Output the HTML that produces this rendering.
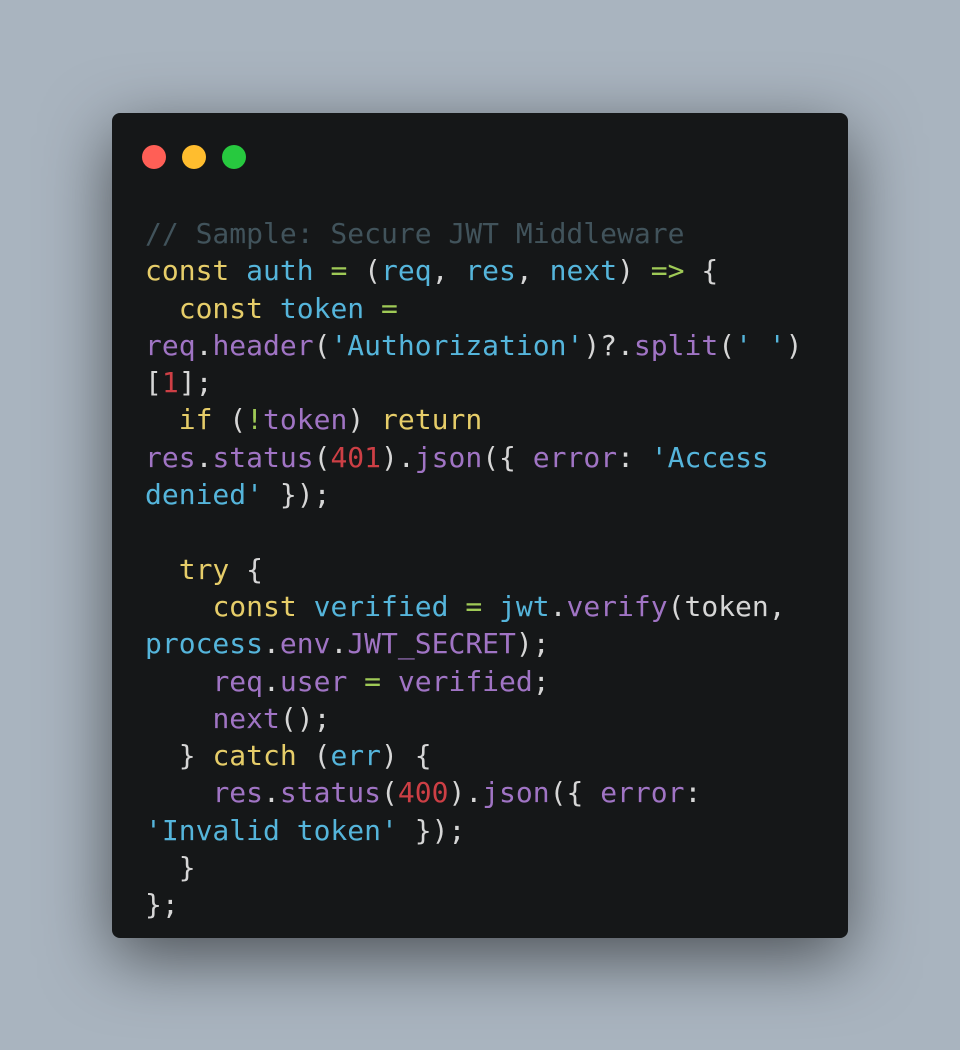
<!DOCTYPE html>
<html><head><meta charset="utf-8"><style>
html,body{margin:0;padding:0;}
body{width:960px;height:1050px;background:#a9b4bf;position:relative;overflow:hidden;font-family:"DejaVu Sans Mono","Liberation Mono",monospace;}
.win{position:absolute;left:112px;top:113px;width:736px;height:825px;background:#151718;border-radius:8px;box-shadow:0 20px 68px rgba(0,0,0,0.55);}
.dot{position:absolute;top:32px;width:24px;height:24px;border-radius:50%;}
pre{position:absolute;left:33px;top:102px;margin:0;font-family:"DejaVu Sans Mono",monospace;font-size:28px;line-height:37.3px;color:#d6d6d6;}
.c{color:#41535b}.k{color:#e6cd69}.b{color:#55b5db}.g{color:#9fca56}.p{color:#a074c4}.r{color:#cd3f45}
</style></head><body>
<div class="win">
<div class="dot" style="left:30px;background:#ff5f56"></div>
<div class="dot" style="left:70px;background:#ffbd2e"></div>
<div class="dot" style="left:110px;background:#27c93f"></div>
<pre><span class="c">// Sample: Secure JWT Middleware</span>
<span class="k">const</span> <span class="b">auth</span> <span class="g">=</span> (<span class="b">req</span>, <span class="b">res</span>, <span class="b">next</span>) <span class="g">=&gt;</span> {
  <span class="k">const</span> <span class="b">token</span> <span class="g">=</span>
<span class="p">req</span>.<span class="p">header</span>(<span class="b">'Authorization'</span>)?.<span class="p">split</span>(<span class="b">' '</span>)
[<span class="r">1</span>];
  <span class="k">if</span> (<span class="g">!</span><span class="p">token</span>) <span class="k">return</span>
<span class="p">res</span>.<span class="p">status</span>(<span class="r">401</span>).<span class="p">json</span>({ <span class="p">error</span>: <span class="b">'Access</span>
<span class="b">denied'</span> });

  <span class="k">try</span> {
    <span class="k">const</span> <span class="b">verified</span> <span class="g">=</span> <span class="b">jwt</span>.<span class="p">verify</span>(token,
<span class="b">process</span>.<span class="p">env</span>.<span class="p">JWT_SECRET</span>);
    <span class="p">req</span>.<span class="p">user</span> <span class="g">=</span> <span class="p">verified</span>;
    <span class="p">next</span>();
  } <span class="k">catch</span> (<span class="b">err</span>) {
    <span class="p">res</span>.<span class="p">status</span>(<span class="r">400</span>).<span class="p">json</span>({ <span class="p">error</span>:
<span class="b">'Invalid token'</span> });
  }
};</pre>
</div>
</body></html>
